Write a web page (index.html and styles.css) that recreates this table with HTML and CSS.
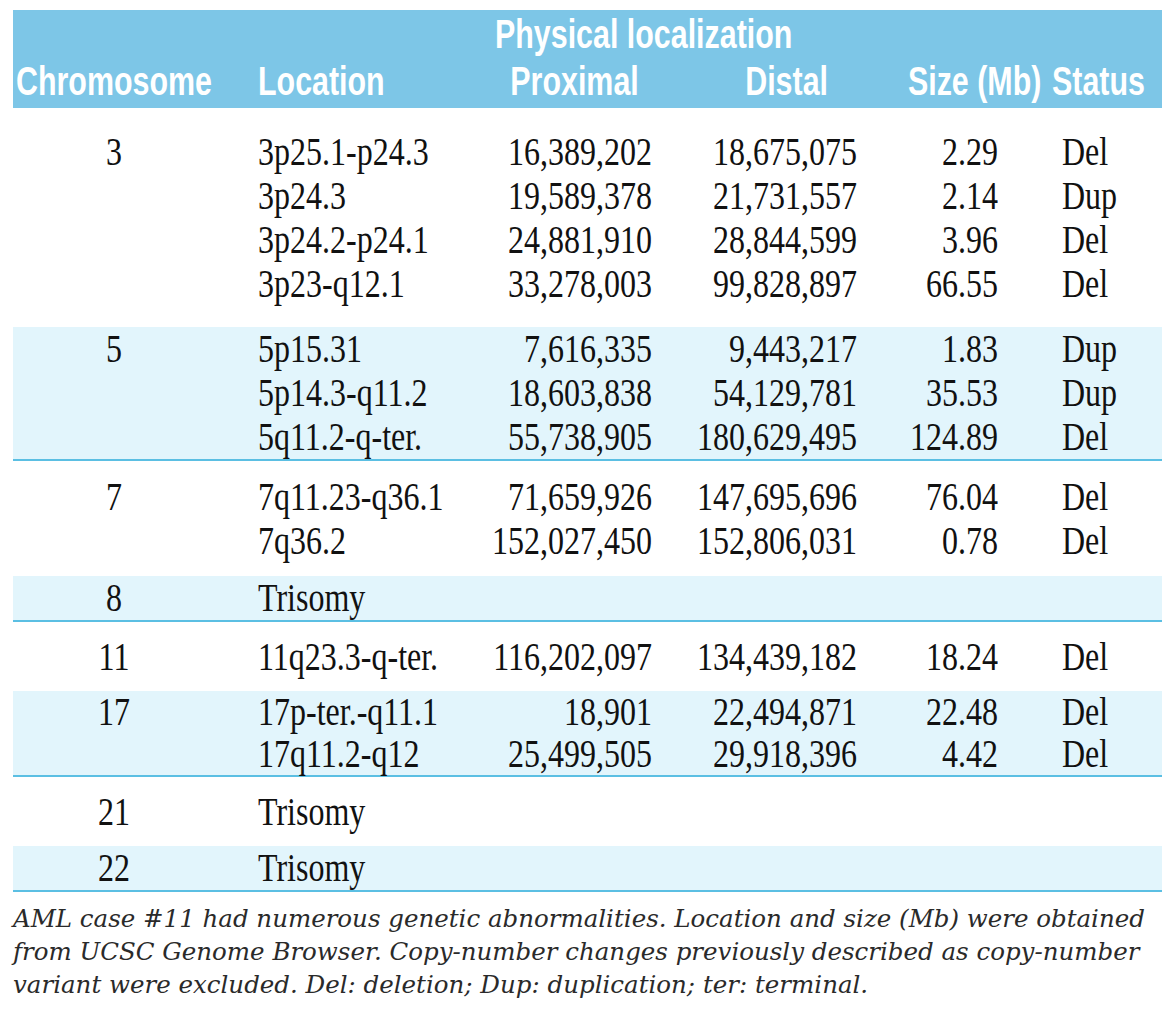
FILE: index.html
```html
<!DOCTYPE html>
<html lang="en">
<head>
<meta charset="utf-8">
<title>Genetic abnormalities – AML case #11</title>
<link rel="stylesheet" href="styles.css">
</head>
<body>
<div class="page">
<table class="cnv">
  <colgroup>
    <col class="c1"><col class="c2"><col class="c3"><col class="c4"><col class="c5"><col class="c6">
  </colgroup>
  <thead>
    <tr class="h1">
      <th colspan="2"></th>
      <th colspan="4" class="phys"><div class="sx l">Physical localization</div></th>
    </tr>
    <tr class="h2">
      <th class="hc"><div class="sx l">Chromosome</div></th>
      <th class="hl"><div class="sx l">Location</div></th>
      <th class="hp"><div class="sx r">Proximal</div></th>
      <th class="hd"><div class="sx r">Distal</div></th>
      <th class="hs"><div class="sx r">Size (Mb)</div></th>
      <th class="ht"><div class="sx l">Status</div></th>
    </tr>
  </thead>
  <tbody>
    <tr class="g w g3">
      <td class="chr"><div>3</div></td>
      <td class="loc"><div>3p25.1-p24.3</div><div>3p24.3</div><div>3p24.2-p24.1</div><div>3p23-q12.1</div></td>
      <td class="num prox"><div>16,389,202</div><div>19,589,378</div><div>24,881,910</div><div>33,278,003</div></td>
      <td class="num dist"><div>18,675,075</div><div>21,731,557</div><div>28,844,599</div><div>99,828,897</div></td>
      <td class="num size"><div>2.29</div><div>2.14</div><div>3.96</div><div>66.55</div></td>
      <td class="st"><div>Del</div><div>Dup</div><div>Del</div><div>Del</div></td>
    </tr>
    <tr class="g b">
      <td class="chr"><div>5</div></td>
      <td class="loc"><div>5p15.31</div><div>5p14.3-q11.2</div><div>5q11.2-q-ter.</div></td>
      <td class="num prox"><div>7,616,335</div><div>18,603,838</div><div>55,738,905</div></td>
      <td class="num dist"><div>9,443,217</div><div>54,129,781</div><div>180,629,495</div></td>
      <td class="num size"><div>1.83</div><div>35.53</div><div>124.89</div></td>
      <td class="st"><div>Dup</div><div>Dup</div><div>Del</div></td>
    </tr>
    <tr class="g w g7">
      <td class="chr"><div>7</div></td>
      <td class="loc"><div>7q11.23-q36.1</div><div>7q36.2</div></td>
      <td class="num prox"><div>71,659,926</div><div>152,027,450</div></td>
      <td class="num dist"><div>147,695,696</div><div>152,806,031</div></td>
      <td class="num size"><div>76.04</div><div>0.78</div></td>
      <td class="st"><div>Del</div><div>Del</div></td>
    </tr>
    <tr class="g b">
      <td class="chr"><div>8</div></td>
      <td class="loc"><div>Trisomy</div></td>
      <td class="num prox"></td>
      <td class="num dist"></td>
      <td class="num size"></td>
      <td class="st"></td>
    </tr>
    <tr class="g w">
      <td class="chr"><div>11</div></td>
      <td class="loc"><div>11q23.3-q-ter.</div></td>
      <td class="num prox"><div>116,202,097</div></td>
      <td class="num dist"><div>134,439,182</div></td>
      <td class="num size"><div>18.24</div></td>
      <td class="st"><div>Del</div></td>
    </tr>
    <tr class="g b g17">
      <td class="chr"><div>17</div></td>
      <td class="loc"><div>17p-ter.-q11.1</div><div>17q11.2-q12</div></td>
      <td class="num prox"><div>18,901</div><div>25,499,505</div></td>
      <td class="num dist"><div>22,494,871</div><div>29,918,396</div></td>
      <td class="num size"><div>22.48</div><div>4.42</div></td>
      <td class="st"><div>Del</div><div>Del</div></td>
    </tr>
    <tr class="g w">
      <td class="chr"><div>21</div></td>
      <td class="loc"><div>Trisomy</div></td>
      <td class="num prox"></td>
      <td class="num dist"></td>
      <td class="num size"></td>
      <td class="st"></td>
    </tr>
    <tr class="g b">
      <td class="chr"><div>22</div></td>
      <td class="loc"><div>Trisomy</div></td>
      <td class="num prox"></td>
      <td class="num dist"></td>
      <td class="num size"></td>
      <td class="st"></td>
    </tr>
  </tbody>
</table>
<p class="note">AML case #11 had numerous genetic abnormalities. Location and size (Mb) were obtained<br>from UCSC Genome Browser. Copy-number changes previously described as copy-number<br>variant were excluded. Del: deletion; Dup: duplication; ter: terminal.</p>
</div>
</body>
</html>
```

FILE: styles.css
```css
* { box-sizing: border-box; }

html, body {
  margin: 0;
  padding: 0;
  background: #ffffff;
}

.page {
  padding: 10px 8px 0 13px;
}

.cnv {
  width: 1149px;
  table-layout: fixed;
  border-collapse: collapse;
  border-spacing: 0;
  font-family: "Liberation Serif", "Times New Roman", serif;
  color: #111111;
}

.c1 { width: 202px; }
.c2 { width: 255px; }
.c3 { width: 195px; }
.c4 { width: 205px; }
.c5 { width: 160px; }
.c6 { width: 132px; }

/* ---------- header ---------- */
.cnv thead {
  background: #7dc6e7;
}

.cnv th {
  padding: 0;
  font-family: "Liberation Sans", Arial, sans-serif;
  font-weight: 700;
  font-size: 40px;
  line-height: 40px;
  color: #ffffff;
  white-space: nowrap;
}

.h1 th {
  height: 46px;
  vertical-align: top;
  padding-top: 4px;
}

.h2 th {
  height: 52px;
  vertical-align: top;
  padding-top: 5px;
}

.sx { transform: scaleX(0.76); }
.sx.l { transform-origin: left center; }
.sx.r { transform-origin: right center; }
.sx.c { transform-origin: center center; }

.phys { text-align: left; padding-left: 25px !important; }
.hc { text-align: left; padding-left: 3px !important; }
.hl { text-align: left; padding-left: 43px !important; }
.hp { text-align: right; padding-right: 27px !important; }
.hd { text-align: right; padding-right: 42px !important; }
.hs { text-align: right; padding-right: 2px !important; }
.ht { text-align: left; padding-left: 22px !important; }

/* ---------- body ---------- */
.cnv td {
  vertical-align: top;
  padding-top: 0;
  padding-bottom: 0;
  font-size: 40px;
  line-height: 44px;
  white-space: nowrap;
}

.cnv td div {
  transform: scaleX(0.8);
  height: 44px;
}

.g17 td { line-height: 42px; }
.g17 td div { height: 42px; }

.chr { text-align: center; }
.chr div {
  display: flex;
  justify-content: center;
  transform-origin: center center;
}

.loc { text-align: left; padding-left: 43px; }
.loc div { transform-origin: left center; }

.num { text-align: right; }
.num div {
  display: flex;
  justify-content: flex-end;
  transform-origin: right center;
}
.prox { padding-right: 13px; }
.dist { padding-right: 13px; }
.size { padding-right: 32px; }

.st { text-align: left; padding-left: 32px; }
.st div { transform-origin: left center; }

/* group shading */
.g.w td {
  background: #ffffff;
  padding-top: 13px;
  padding-bottom: 12px;
}

.g.b td {
  background: #e2f5fc;
}

.g.b {
  border-bottom: 2px solid #5bbfe3;
}

.g.w.g3 td {
  padding-top: 22px;
  padding-bottom: 21px;
}

.g.w.g7 td {
  padding-top: 14px;
  padding-bottom: 13px;
}

/* ---------- footnote ---------- */
.note {
  margin: 10px 0 0;
  font-family: "DejaVu Serif", "Liberation Serif", serif;
  font-style: italic;
  font-size: 24.5px;
  line-height: 33px;
  color: #2a2a2a;
  white-space: nowrap;
}
```
